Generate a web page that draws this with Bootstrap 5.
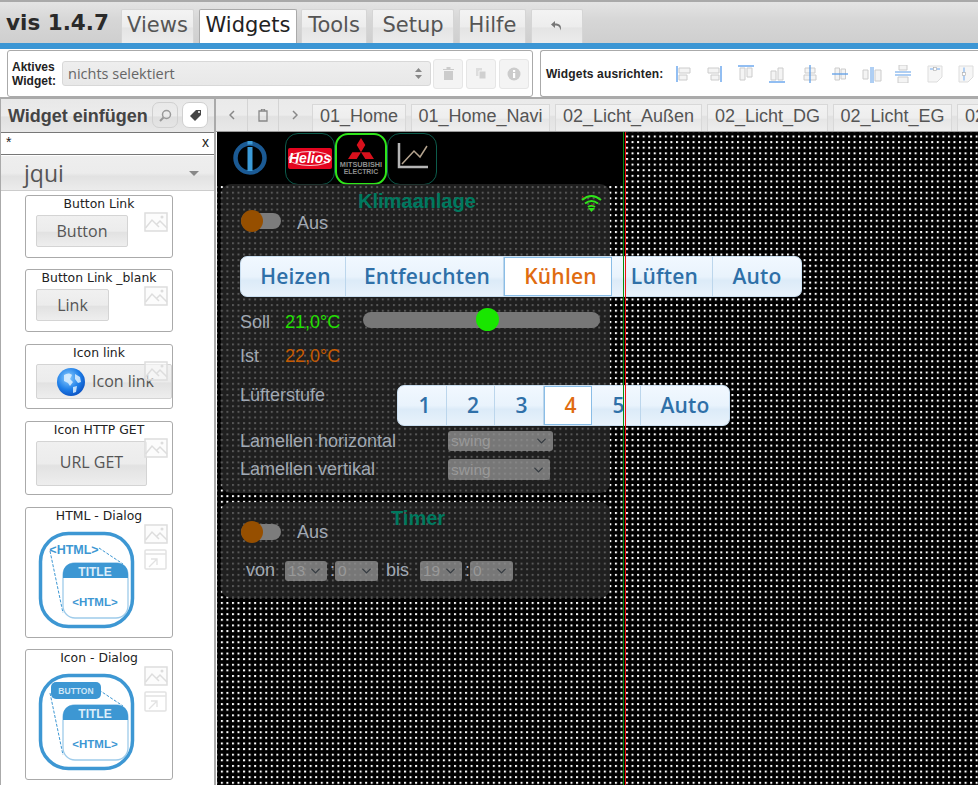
<!DOCTYPE html>
<html lang="de">
<head>
<meta charset="utf-8">
<title>vis</title>
<link href="https://cdn.jsdelivr.net/npm/bootstrap@5.3.0/dist/css/bootstrap.min.css" rel="stylesheet">
<style>
html,body{height:785px;overflow:hidden;background:#fff;}
body{font-family:"Liberation Sans",Arial,sans-serif;color:#222;width:978px;}
.topbar{height:43px;border-top:2px solid #a9a9a9;background:linear-gradient(#e4e4e4,#d6d6d6 45%,#cfcfcf);padding-left:6px;}
.brand{font:700 21.500px/40px "DejaVu Sans",sans-serif;color:#2a2a2a;width:115px;white-space:nowrap;}
.toptab{height:34px;margin-right:5px;background:linear-gradient(#f3f3f3,#ededed 50%,#e4e4e4 55%,#ececec);border:1px solid #d5d5d5;border-bottom:0;color:#555;font:21px/30px "DejaVu Sans",sans-serif;padding:0;border-radius:2px 2px 0 0;text-align:center;}
.toptab.sel{background:#fff;color:#222;border-color:#aaa;}
.t-views{width:73px;}.t-widgets{width:98px;margin-right:4px;}.t-tools{width:66px;}.t-setup{width:82px;}.t-hilfe{width:67px;}.t-undo{width:52px;}
.bluebar{height:6px;background:#3c96d4;}
.toolrow{height:50px;padding:1px 0 0 7px;gap:7px;border-bottom:2px solid #aaa;}
.toolbox{border:1px solid #aaa;border-radius:3px;height:47px;}
.tb-a{width:526px;padding-left:4px;}
.tb-b{flex:1;border-right:0;border-radius:3px 0 0 3px;padding-left:5px;white-space:nowrap;}
.lbl{font-weight:700;font-size:12px;line-height:14px;width:50px;color:#222;flex:none;}
.fakesel{width:369px;height:25px;margin-right:2px;background:linear-gradient(#eee,#e8e8e8);border:1px solid #d8d8d8;border-radius:3px;color:#666;font:14.5px "Open Sans",sans-serif;padding-left:5px;flex:none;}
.sq{width:30px;height:30px;background:#f4f4f4;border:1px solid #e6e6e6;border-radius:3px;margin-right:3px;flex:none;}
.al-lbl{font-weight:700;font-size:12px;letter-spacing:.15px;width:130px;flex:none;}
.al{width:16px;height:18px;flex:none;}
.a1{margin-right:14px;}.a2{margin-right:16px;}.a3{margin-right:15px;}.a4{margin-right:17px;}.a5{margin-right:14px;}.a6{margin-right:14px;}.a7{margin-right:13px;width:20px;}.a8{margin-right:16px;}.a9{margin-right:15px;}
.work{height:686px;}
.side{width:216px;height:686px;border-right:2px solid #aaa;border-left:1px solid #aaa;overflow:hidden;flex:none;}
.sidehead{height:33px;background:linear-gradient(#e8e8e8,#ececec 50%,#e0e0e0 55%,#e8e8e8);padding-left:7px;}
.sidetitle{font-weight:700;font-size:18px;color:#444;width:144px;white-space:nowrap;margin-top:2px;}
.hbtn{width:26px;height:26px;border:1px solid #d0d0d0;border-radius:7px;margin-right:4px;margin-bottom:1px;background:transparent;}
.hbtn.on{background:#fff;}
.filter{height:23px;border-top:1px solid #777;border-bottom:1px solid #777;font-size:13px;padding:0 5px;line-height:19px;}
.filter b{font-weight:400;font-size:14px;}
.accord{height:35px;margin-top:1px;background:linear-gradient(#eee,#ececec 50%,#e2e2e2 60%,#ececec);border-bottom:1px solid #ccc;font:23px/35px "Open Sans",sans-serif;color:#555;padding-left:23px;}
.tri{width:0;height:0;border:5px solid transparent;border-top:5px solid #888;border-bottom:0;margin-right:15px;}
.wcard{position:relative;width:148px;margin-left:24px;border:1px solid #aaa;border-radius:3px;text-align:center;font:12.400px/16px "DejaVu Sans",sans-serif;color:#222;white-space:nowrap;}
.c1{height:63px;margin-top:4px;margin-bottom:11px;}
.c2{height:63px;margin-bottom:12px;}
.c3{height:65px;margin-bottom:12px;}
.c4{height:74px;margin-bottom:12px;}
.c5{height:131px;margin-bottom:11px;}
.c6{height:131px;}
.wbtn{display:block;background:linear-gradient(#f0f0f0,#ececec 50%,#e2e2e2 55%,#eee);border:1px solid #d4d4d4;border-radius:2px;color:#555;font:16px "Open Sans",sans-serif;margin:3px 0 0 10px;text-align:center;}
.w1{width:92px;height:32px;line-height:30px;}
.w2{width:73px;height:32px;line-height:30px;}
.w3{width:136px;height:35px;line-height:32px;padding-left:55px;position:relative;text-align:left;}
.w4{width:111px;height:45px;line-height:41px;}
.globe{position:absolute;left:19px;top:2px;width:30px;height:30px;}
.pic{position:absolute;left:118px;top:16px;width:24px;height:20px;}
.pic2{position:absolute;left:118px;top:41px;width:24px;height:22px;}
.dlg{display:block;margin:7px 0 0 12px;width:98px;height:98px;}
.mainpane{width:762px;flex:none;}
.tabstrip{height:33px;background:linear-gradient(#eaeaea,#ececec 50%,#e2e2e2 55%,#e8e8e8);padding-left:1px;white-space:nowrap;overflow:hidden;border-bottom:1px solid #999;}
.nav3{width:31px;height:32px;border-right:1px solid #d4d4d4;flex:none;}
.vtab{height:27px;background:linear-gradient(#f2f2f2,#eee 50%,#e6e6e6 55%,#eee);border:1px solid #d8d8d8;border-bottom:0;color:#555;font-size:18px;line-height:22px;margin-right:5px;text-align:center;flex:none;}
.v0{margin-left:2px;width:94px;}.v1{width:139px;}.v2{width:147px;}.v3{width:121px;}.v4{width:119px;}.v5{width:40px;padding-left:7px;text-align:left;}
.canvas{position:relative;height:653px;margin-left:1px;background:#000;overflow:hidden;}
.dots{position:absolute;inset:0;width:100%;height:100%;}
.blackbox{position:absolute;left:0;top:0;width:408px;height:52px;background:#000;}
.vline{position:absolute;top:0;bottom:0;width:1px;z-index:9;}
.vl-g{left:406px;background:#0a8a0a;}.vl-r{left:408px;background:#f01010;}
.navico{position:absolute;top:1px;width:50px;height:52px;border:1px solid #0c5c4c;border-radius:13px;}
.n1{left:68px;}.n2{left:118px;width:52px;border:2px solid #2fe51a;}.n3{left:170px;}
.n1 svg,.n2 svg,.n3 svg{display:block;width:100%;height:100%;}
.brandlogo{position:absolute;left:15px;top:8px;width:36px;height:36px;}
.pane{position:absolute;left:4px;width:389px;background:rgba(40,40,40,.78);border-radius:10px;}
.p1{top:52px;height:309px;}
.p2{top:370px;height:96px;}
.ptitle{position:absolute;font-weight:700;font-size:20px;line-height:24px;color:#00795f;}
.pt1{left:141px;top:57px;}.pt2{left:174px;top:374px;}
.lab{position:absolute;color:#a1a9b3;font-size:18px;line-height:20px;white-space:nowrap;}
.lb-aus1{left:80px;top:81px;}.lb-aus2{left:80px;top:390px;}
.lb-soll{left:23px;top:180px;}.lb-ist{left:23px;top:214px;}.lb-luef{left:23px;top:253px;}
.lb-lh{left:23px;top:299px;}.lb-lv{left:23px;top:327px;}
.lb-von{left:29px;top:428px;}.lb-bis{left:169px;top:428px;}.lb-c1{left:113px;top:428px;}.lb-c2{left:248px;top:428px;}
.green{left:68px;top:180px;color:#22e000;}
.orange{left:68px;top:214px;color:#c65a00;}
.tog{position:absolute;left:24px;width:40px;height:16px;background:#7c7c7c;border-radius:8px;}
.tg1{top:81px;}.tg2{top:392px;}
.knob{position:absolute;left:0;top:-3px;width:22px;height:22px;border-radius:50%;background:#964f00;}
.slider{position:absolute;left:146px;top:180px;width:237px;height:16px;background:#777;border-radius:8px;}
.sknob{position:absolute;left:113px;top:-4px;width:23px;height:23px;border-radius:50%;background:#19e600;}
.segs{position:absolute;z-index:5;border:1px solid #c9def0;border-radius:7px;overflow:hidden;background:linear-gradient(#f1f8ff,#e9f3fc 50%,#dcebf8 60%,#e8f2fb);}
.sg1{left:23px;top:124px;height:41px;width:562px;}
.sg2{left:180px;top:253px;height:41px;width:333px;}
.seg{font:600 21px/37px "Open Sans",sans-serif;letter-spacing:.2px;color:#2f70a8;border:0;border-right:1px solid #bcd6ec;background:transparent;padding:0 0 0 5px;border-radius:0;text-align:center;flex:none;}
.seg:last-child{border-right:0;padding-left:0;}
.seg.act{background:#fff;color:#e06c11;border:1px solid #8abde6;}
.sa1{width:105px;}.sa2{width:158px;}.sa3{width:108px;}.sa4{width:101px;}.sa5{width:88px;}
.sb1{width:49px;}.sb2{width:48px;}.sb3{width:49px;}.sb4{width:48px;}.sb5{width:49px;}.sb6{width:88px;}
.sel-s{position:absolute;width:105px;height:20px;padding:0 0 0 3px;background-color:rgba(150,150,150,.75);border:0;border-radius:3px;font-size:15.500px;line-height:20px;color:#999;background-size:13px 10px;background-position:right 5px center;min-height:0;}
.s1{left:231px;top:299px;}.s2{left:231px;top:327px;width:102px;height:21px;}
.s3{left:68px;top:429px;width:42px;}.s4{left:118px;top:429px;width:43px;}.s5{left:203px;top:429px;width:42px;}.s6{left:253px;top:429px;width:43px;}
.wifi{position:absolute;left:364px;top:61px;width:21px;height:20px;}
</style>
</head>
<body class="m-0">
<div class="topbar d-flex align-items-end">
  <div class="brand">vis 1.4.7</div>
  <div class="toptab t-views">Views</div>
  <div class="toptab sel t-widgets">Widgets</div>
  <div class="toptab t-tools">Tools</div>
  <div class="toptab t-setup">Setup</div>
  <div class="toptab t-hilfe">Hilfe</div>
  <div class="toptab t-undo d-flex align-items-center justify-content-center">
    <svg width="14" height="13" viewBox="0 0 14 13"><path d="M5 1 1 4.500 5 8V5.500c3 0 5 1 5.500 5C12 6 10 3.500 5 3.500Z" fill="#777"/></svg>
  </div>
</div>
<div class="bluebar"></div>
<div class="toolrow d-flex">
  <div class="toolbox tb-a d-flex align-items-center">
    <div class="lbl">Aktives Widget:</div>
    <div class="fakesel d-flex align-items-center justify-content-between">nichts selektiert
      <svg class="me-2" width="7" height="11" viewBox="0 0 7 11"><path d="M3.500 0 7 4H0ZM3.500 11 0 7h7Z" fill="#888"/></svg>
    </div>
    <div class="sq d-flex align-items-center justify-content-center"><svg width="11" height="13" viewBox="0 0 11 13"><path d="M0 2h11v1H0ZM3.500 0h4v2h-4ZM1 4h9v9H1Z" fill="#ccc"/></svg></div>
    <div class="sq d-flex align-items-center justify-content-center"><svg width="13" height="13" viewBox="0 0 13 13"><path d="M1 1h6v8H1Z" fill="#ddd"/><path d="M4 4h7v8H4Z" fill="#d0d0d0" stroke="#f4f4f4"/></svg></div>
    <div class="sq d-flex align-items-center justify-content-center"><svg width="14" height="14" viewBox="0 0 14 14"><circle cx="7" cy="7" r="6.500" fill="#ccc"/><rect x="6" y="6" width="2.200" height="5" fill="#fff"/><rect x="6" y="3" width="2.200" height="2" fill="#fff"/></svg></div>
  </div>
  <div class="toolbox tb-b d-flex align-items-center">
    <div class="al-lbl">Widgets ausrichten:</div>
    <svg class="al a1" viewBox="0 0 16 18"><path d="M1 1v16" stroke="#6ea8ee" stroke-width="1.500"/><path d="M3 3h11v5H3ZM3 10h8v5H3Z" fill="#f4f4f4" stroke="#ccc"/></svg>
    <svg class="al a2" viewBox="0 0 16 18"><path d="M15 1v16" stroke="#6ea8ee" stroke-width="1.500"/><path d="M2 3h11v5H2ZM5 10h8v5H5Z" fill="#f4f4f4" stroke="#ccc"/></svg>
    <svg class="al a3" viewBox="0 0 16 18"><path d="M0 1h16" stroke="#6ea8ee" stroke-width="1.500"/><path d="M2 3h5v12H2ZM9 3h5v9H9Z" fill="#f4f4f4" stroke="#ccc"/></svg>
    <svg class="al a4" viewBox="0 0 16 18"><path d="M0 17h16" stroke="#6ea8ee" stroke-width="1.500"/><path d="M2 6h5v9H2ZM9 3h5v12H9Z" fill="#f4f4f4" stroke="#ccc"/></svg>
    <svg class="al a5" viewBox="0 0 16 18"><path d="M3 3h10v5H3ZM2 10h12v5H2Z" fill="#f4f4f4" stroke="#ccc"/><path d="M8 0v18" stroke="#5e9ee8" stroke-width="1.300"/></svg>
    <svg class="al a6" viewBox="0 0 16 18"><path d="M3 3h4.500v12H3ZM9 4h4.500v10H9Z" fill="#f4f4f4" stroke="#ccc"/><path d="M0 9h16" stroke="#5e9ee8" stroke-width="1.300"/></svg>
    <svg class="al a7" viewBox="0 0 20 18"><path d="M1 5h5v9H1ZM13 5h6v11h-6Z" fill="#f4f4f4" stroke="#ccc"/><path d="M9 2v16M11 2v16" stroke="#5e9ee8"/></svg>
    <svg class="al a8" viewBox="0 0 16 18"><path d="M4 0h8v5H4ZM3 12h10v6H3Z" fill="#f4f4f4" stroke="#ccc"/><path d="M0 7h16M0 10h16" stroke="#5e9ee8" stroke-width="1.200"/></svg>
    <svg class="al a9" viewBox="0 0 16 18"><path d="M1 1h14v11l-5 5H1Z" fill="#f6f6f6" stroke="#ddd"/><path d="M3 4h10" stroke="#6ea8ee"/><rect x="6.500" y="2.500" width="3" height="3" fill="#fff" stroke="#aaa" stroke-width=".6"/></svg>
    <svg class="al" viewBox="0 0 16 18"><path d="M1 1h14v11l-5 5H1Z" fill="#f6f6f6" stroke="#ddd"/><path d="M6 2.500v13" stroke="#6ea8ee"/><rect x="4.500" y="7.500" width="3" height="3" fill="#fff" stroke="#aaa" stroke-width=".6"/></svg>
  </div>
</div>
<div class="work d-flex">
  <aside class="side">
    <div class="sidehead d-flex align-items-center">
      <div class="sidetitle">Widget einfügen</div>
      <div class="hbtn d-flex align-items-center justify-content-center"><svg width="13" height="13" viewBox="0 0 13 13"><circle cx="7.500" cy="5.500" r="4" fill="none" stroke="#999" stroke-width="1.500"/><path d="M4.500 8.500 1 12" stroke="#999" stroke-width="2"/></svg></div>
      <div class="hbtn on d-flex align-items-center justify-content-center"><svg width="13" height="12" viewBox="0 0 13 12"><path d="M1 7 7 1h5v5l-6 6Z" fill="#444"/><circle cx="10" cy="3" r="1" fill="#fff"/></svg></div>
    </div>
    <div class="filter d-flex justify-content-between"><b>*</b><b>x</b></div>
    <div class="accord d-flex align-items-center justify-content-between"><span>jqui</span><span class="tri"></span></div>

    <div class="wcard c1">Button Link
      <span class="wbtn w1">Button</span>
      <svg class="pic" viewBox="0 0 24 20"><use href="#picico"/></svg>
    </div>
    <div class="wcard c2">Button Link _blank
      <span class="wbtn w2">Link</span>
      <svg class="pic" viewBox="0 0 24 20"><use href="#picico"/></svg>
    </div>
    <div class="wcard c3">Icon link
      <span class="wbtn w3">
        <svg class="globe" viewBox="0 0 30 30"><defs><radialGradient id="gl" cx=".4" cy=".35" r=".7"><stop offset="0" stop-color="#8fd0ff"/><stop offset=".6" stop-color="#1f7fe8"/><stop offset="1" stop-color="#0a4fc0"/></radialGradient></defs><circle cx="15" cy="15" r="14" fill="url(#gl)"/><path d="M8 8c3-2 6-2 8 0l-2 4 3 3-3 4-2-3-4-2ZM19 7l5 3 1 5-3 1-3-4ZM17 20l4-1-1 6-3 1Z" fill="#dff1ff" opacity=".85"/></svg>Icon link
      </span>
      <svg class="pic" viewBox="0 0 24 20"><use href="#picico"/></svg>
    </div>
    <div class="wcard c4">Icon HTTP GET
      <span class="wbtn w4">URL GET</span>
      <svg class="pic" viewBox="0 0 24 20"><use href="#picico"/></svg>
    </div>
    <div class="wcard c5">HTML - Dialog
      <svg class="dlg" viewBox="0 0 98 98"><use href="#dlgbase"/><text x="36" y="23" text-anchor="middle" font-family="Liberation Sans" font-weight="700" font-size="12.500" fill="#3d97d3">&lt;HTML&gt;</text></svg>
      <svg class="pic" viewBox="0 0 24 20"><use href="#picico"/></svg>
      <svg class="pic2" viewBox="0 0 24 22"><use href="#winico"/></svg>
    </div>
    <div class="wcard c6">Icon - Dialog
      <svg class="dlg" viewBox="0 0 98 98"><use href="#dlgbase"/><rect x="13" y="9" width="50" height="17" rx="5" fill="#3d97d3"/><text x="38" y="21" text-anchor="middle" font-family="Liberation Sans" font-weight="700" font-size="8.500" fill="#cfe6f6">BUTTON</text></svg>
      <svg class="pic" viewBox="0 0 24 20"><use href="#picico"/></svg>
      <svg class="pic2" viewBox="0 0 24 22"><use href="#winico"/></svg>
    </div>
  </aside>
  <div class="mainpane">
    <div class="tabstrip d-flex align-items-end">
      <div class="nav3 d-flex align-items-center justify-content-center"><svg width="6" height="10" viewBox="0 0 6 10"><path d="M5 1 1 5l4 4" fill="none" stroke="#888" stroke-width="1.500"/></svg></div>
      <div class="nav3 d-flex align-items-center justify-content-center"><svg width="10" height="13" viewBox="0 0 10 13"><path d="M1 2h8v10H1ZM3.500 0h3v2h-3Z" fill="none" stroke="#888" stroke-width="1.300"/></svg></div>
      <div class="nav3 d-flex align-items-center justify-content-center border-0"><svg width="6" height="10" viewBox="0 0 6 10"><path d="M1 1l4 4-4 4" fill="none" stroke="#888" stroke-width="1.500"/></svg></div>
      <div class="vtab v0">01_Home</div>
      <div class="vtab v1">01_Home_Navi</div>
      <div class="vtab v2">02_Licht_Außen</div>
      <div class="vtab v3">02_Licht_DG</div>
      <div class="vtab v4">02_Licht_EG</div>
      <div class="vtab v5">02</div>
    </div>
    <div class="canvas">
      <svg class="dots"><defs><pattern id="dotp" x="3.850" y="3.500" width="5.550" height="5.620" patternUnits="userSpaceOnUse"><rect width="2" height="2" fill="#fff"/></pattern></defs><rect width="100%" height="100%" fill="url(#dotp)" shape-rendering="crispEdges"/></svg>
      <div class="blackbox"></div>
      <svg class="brandlogo" viewBox="0 0 36 36"><circle cx="18" cy="18" r="14.500" fill="none" stroke="#1b5a94" stroke-width="4.500"/><rect x="15.500" y="1" width="5" height="3.500" fill="#3c9bd8"/><rect x="15.500" y="7" width="5" height="24" fill="#3c9bd8"/></svg>
      <div class="navico n1"><svg viewBox="0 0 48 50"><path d="M4 14h40a2 2 0 0 1 2 2v17a2 2 0 0 1-2 2H4a2 2 0 0 1-2-2V16a2 2 0 0 1 2-2Z" fill="#e4051f"/><ellipse cx="24" cy="24.500" rx="21" ry="7" fill="none" stroke="#fff" stroke-width=".8"/><text x="24" y="29" text-anchor="middle" font-family="Liberation Sans" font-weight="700" font-style="italic" font-size="14" fill="#fff">Helios</text></svg></div>
      <div class="navico n2"><svg viewBox="0 0 48 50"><path d="M24 3l4.500 7.500L24 18l-4.500-7.500ZM24 18h9l4.500 7H28.500ZM24 18h-9l-4.500 7h9Z" fill="#d8101c"/><text x="24" y="33" text-anchor="middle" font-family="Liberation Sans" font-weight="700" font-size="7.500" textLength="44" lengthAdjust="spacingAndGlyphs" fill="#8e8e8e">MITSUBISHI</text><text x="24" y="41" text-anchor="middle" font-family="Liberation Sans" font-weight="700" font-size="7.500" textLength="36" lengthAdjust="spacingAndGlyphs" fill="#8e8e8e">ELECTRIC</text></svg></div>
      <div class="navico n3"><svg viewBox="0 0 48 50"><path d="M11 9v24h29" fill="none" stroke="#b5b5b5" stroke-width="2.500"/><path d="M14 30 26 17l6 6 7-11" fill="none" stroke="#b5a48f" stroke-width="1.500"/></svg></div>

      <div class="pane p1"></div>
      <div class="pane p2"></div>
      <div class="ptitle pt1">Klimaanlage</div>
      <svg class="wifi" viewBox="0 0 21 20"><path d="M1 7c6-5 13-5 19 0M4 10.500c4-3 9-3 13 0M7 14c2-1.500 5-1.500 7 0" fill="none" stroke="#2fe51a" stroke-width="2"/><path d="M10.500 19 7 15h7Z" fill="#2fe51a"/><path d="M1 3 19 18" stroke="#d02020" stroke-width=".8" stroke-dasharray="3 9"/></svg>
      <div class="tog tg1"><div class="knob"></div></div>
      <div class="lab lb-aus1">Aus</div>

      <div class="segs sg1 d-flex">
        <button class="btn seg sa1">Heizen</button>
        <button class="btn seg sa2">Entfeuchten</button>
        <button class="btn seg act sa3">Kühlen</button>
        <button class="btn seg sa4">Lüften</button>
        <button class="btn seg sa5">Auto</button>
      </div>

      <div class="lab lb-soll">Soll</div>
      <div class="lab green">21,0°C</div>
      <div class="slider"><div class="sknob"></div></div>
      <div class="lab lb-ist">Ist</div>
      <div class="lab orange">22,0°C</div>
      <div class="lab lb-luef">Lüfterstufe</div>

      <div class="segs sg2 d-flex">
        <button class="btn seg sb1">1</button>
        <button class="btn seg sb2">2</button>
        <button class="btn seg sb3">3</button>
        <button class="btn seg act sb4">4</button>
        <button class="btn seg sb5">5</button>
        <button class="btn seg sb6">Auto</button>
      </div>

      <div class="lab lb-lh">Lamellen horizontal</div>
      <select class="form-select sel-s s1"><option>swing</option></select>
      <div class="lab lb-lv">Lamellen vertikal</div>
      <select class="form-select sel-s s2"><option>swing</option></select>

      <div class="ptitle pt2">Timer</div>
      <div class="tog tg2"><div class="knob"></div></div>
      <div class="lab lb-aus2">Aus</div>
      <div class="lab lb-von">von</div>
      <select class="form-select sel-s s3"><option>13</option></select>
      <div class="lab lb-c1">:</div>
      <select class="form-select sel-s s4"><option>0</option></select>
      <div class="lab lb-bis">bis</div>
      <select class="form-select sel-s s5"><option>19</option></select>
      <div class="lab lb-c2">:</div>
      <select class="form-select sel-s s6"><option>0</option></select>

      <div class="vline vl-g"></div>
      <div class="vline vl-r"></div>
    </div>
  </div>
</div>
<svg width="0" height="0" class="position-absolute">
  <defs>
    <g id="picico"><rect x="1" y="1" width="22" height="18" fill="#fafafa" fill-opacity=".6" stroke="#ddd" stroke-width="1.500"/><path d="M1.500 16 8 8l7 7M13 12l3-3 7 7" fill="none" stroke="#ddd" stroke-width="1.500"/><circle cx="18" cy="5" r="1.500" fill="#ddd"/></g>
    <g id="winico"><rect x="1" y="1" width="21" height="19" rx="1" fill="none" stroke="#e2e2e2" stroke-width="1.500"/><path d="M1 5h21M5 18l8-8M7 10h6v6" fill="none" stroke="#e2e2e2" stroke-width="1.300"/></g>
    <g id="dlgbase">
      <rect x="2.500" y="2.500" width="92" height="93" rx="28" fill="#fff" stroke="#3d97d3" stroke-width="3.500"/>
      <path d="M12 20 25 82M61 17 85 33" fill="none" stroke="#3d97d3" stroke-width="1" stroke-dasharray="3 1.500"/>
      <rect x="25" y="32" width="65" height="55" rx="12" fill="#fff" stroke="#9ecbea" stroke-width="1.300"/>
      <path d="M25 47V42a10 10 0 0 1 10-10h45a10 10 0 0 1 10 10v5Z" fill="#3d97d3"/>
      <text x="57" y="45" text-anchor="middle" font-family="Liberation Sans" font-weight="700" font-size="12" fill="#dceefa">TITLE</text>
      <text x="57" y="75" text-anchor="middle" font-family="Liberation Sans" font-weight="700" font-size="11.500" fill="#3d97d3">&lt;HTML&gt;</text>
    </g>
  </defs>
</svg>
<script src="https://cdn.jsdelivr.net/npm/bootstrap@5.3.0/dist/js/bootstrap.bundle.min.js"></script>
</body>
</html>
